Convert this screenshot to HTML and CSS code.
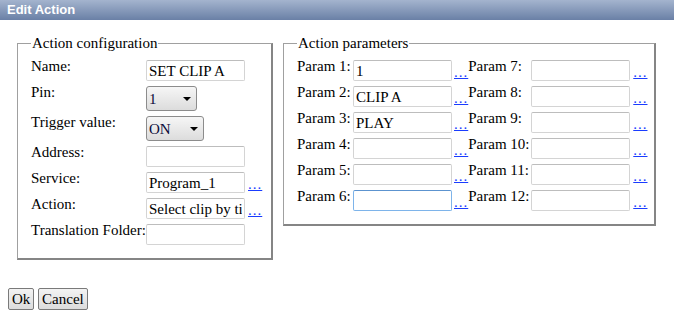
FILE: index.html
```html
<!DOCTYPE html>
<html lang="en">
<head>
  <meta charset="UTF-8">
  <title>Edit Action</title>
  <link rel="stylesheet" href="styles.css">
</head>
<body>

  <div class="titlebar">Edit Action</div>

  <div class="main">
    <fieldset class="config">
      <legend>Action configuration</legend>
      <div class="row">
        <label class="lbl">Name:</label>
        <input class="field" type="text" value="SET CLIP A">
      </div>
      <div class="row">
        <label class="lbl">Pin:</label>
        <span class="dropdown pin"><select><option>1</option></select></span>
      </div>
      <div class="row">
        <label class="lbl">Trigger value:</label>
        <span class="dropdown trigger"><select><option>ON</option></select></span>
      </div>
      <div class="row">
        <label class="lbl">Address:</label>
        <input class="field" type="text" value="">
      </div>
      <div class="row">
        <label class="lbl">Service:</label>
        <input class="field" type="text" value="Program_1">
        <a class="more" href="#">...</a>
      </div>
      <div class="row">
        <label class="lbl">Action:</label>
        <input class="field" type="text" value="Select clip by title">
        <a class="more" href="#">...</a>
      </div>
      <div class="row">
        <label class="lbl">Translation Folder:</label>
        <input class="field" type="text" value="">
      </div>
    </fieldset>

    <fieldset class="params">
      <legend>Action parameters</legend>
      <div class="prow">
        <label class="plbl">Param 1:</label><input class="field" type="text" value="1"><a class="more" href="#">...</a>
        <label class="plbl wide">Param 7:</label><input class="field" type="text" value=""><a class="more far" href="#">...</a>
      </div>
      <div class="prow">
        <label class="plbl">Param 2:</label><input class="field" type="text" value="CLIP A"><a class="more" href="#">...</a>
        <label class="plbl wide">Param 8:</label><input class="field" type="text" value=""><a class="more far" href="#">...</a>
      </div>
      <div class="prow">
        <label class="plbl">Param 3:</label><input class="field" type="text" value="PLAY"><a class="more" href="#">...</a>
        <label class="plbl wide">Param 9:</label><input class="field" type="text" value=""><a class="more far" href="#">...</a>
      </div>
      <div class="prow">
        <label class="plbl">Param 4:</label><input class="field" type="text" value=""><a class="more" href="#">...</a>
        <label class="plbl wide">Param 10:</label><input class="field" type="text" value=""><a class="more far" href="#">...</a>
      </div>
      <div class="prow">
        <label class="plbl">Param 5:</label><input class="field" type="text" value=""><a class="more" href="#">...</a>
        <label class="plbl wide">Param 11:</label><input class="field" type="text" value=""><a class="more far" href="#">...</a>
      </div>
      <div class="prow">
        <label class="plbl">Param 6:</label><input class="field focused" type="text" value=""><a class="more" href="#">...</a>
        <label class="plbl wide">Param 12:</label><input class="field" type="text" value=""><a class="more far" href="#">...</a>
      </div>
    </fieldset>
  </div>

  <div class="buttons">
    <button type="button">Ok</button>
    <button type="button">Cancel</button>
  </div>

</body>
</html>
```

FILE: styles.css
```css
html, body {
  margin: 0;
  background: #fff;
  font-family: "Liberation Serif", "Times New Roman", serif;
  font-size: 15px;
  color: #000;
}

.titlebar {
  height: 20px;
  line-height: 20px;
  padding-left: 7px;
  background: linear-gradient(#a4b4ce, #6a80a6);
  color: #fff;
  font-family: "Liberation Sans", Arial, sans-serif;
  font-weight: bold;
  font-size: 13px;
}

.main {
  display: flex;
  align-items: flex-start;
  gap: 10px;
  padding: 15px 0 0 17px;
}

fieldset {
  box-sizing: border-box;
  margin: 0;
  padding: 8px 0 13px 13px;
  border: 1px solid #a0a0a0;
  border-right: 2px solid #858585;
  border-bottom: 2px solid #858585;
}

legend {
  padding: 0 1px;
  line-height: 17px;
}

.config {
  width: 256px;
}

.params {
  width: 373px;
}

.row,
.prow {
  display: flex;
  align-items: flex-start;
  margin-bottom: 5px;
}

.row:last-child,
.prow:last-child {
  margin-bottom: 0;
}

.lbl,
.plbl {
  line-height: 17px;
  margin-top: -2px;
  white-space: nowrap;
}

.lbl {
  width: 115px;
}

.plbl {
  width: 56px;
}

.plbl.wide {
  width: 63px;
}

.field {
  box-sizing: border-box;
  width: 99px;
  height: 21px;
  margin: 0;
  padding: 2px 2px 0;
  border: 1px solid #d4d4d4;
  border-top-color: #bdbdbd;
  border-radius: 2px;
  font-family: "Liberation Serif", "Times New Roman", serif;
  font-size: 15px;
  color: #000;
  background: #fff;
  outline: none;
}

.field.focused {
  border-color: #7eb4ea;
  border-top-color: #5c93cf;
}

.more {
  align-self: center;
  margin-left: 2px;
  margin-top: 3px;
  color: #1a3cff;
  font-size: 15px;
  line-height: 15px;
  letter-spacing: 1px;
}

.row .more {
  margin-left: 3px;
}

.more.far {
  margin-left: 3px;
}

.dropdown {
  position: relative;
  display: inline-block;
}

.dropdown select {
  box-sizing: border-box;
  height: 25px;
  margin: 0;
  padding: 1px 0 0 2px;
  border: 1px solid #8c8c8c;
  border-radius: 3px;
  background: linear-gradient(#f6f6f6, #dcdcdc);
  font-family: "Liberation Serif", "Times New Roman", serif;
  font-size: 15px;
  color: #0a0a3a;
  -webkit-appearance: none;
  appearance: none;
}

.dropdown::after {
  content: "";
  position: absolute;
  right: 6px;
  top: 11px;
  border-left: 4px solid transparent;
  border-right: 4px solid transparent;
  border-top: 4px solid #000;
  pointer-events: none;
}

.dropdown.pin select {
  width: 51px;
}

.dropdown.trigger select {
  width: 58px;
}

.buttons {
  padding: 28px 0 0 8px;
}

.buttons button {
  height: 22px;
  margin: 0;
  padding: 0 3px;
  border: 1px solid #7a7a7a;
  border-radius: 2px;
  background: linear-gradient(#f3f3f3, #dcdcdc);
  font-family: "Liberation Serif", "Times New Roman", serif;
  font-size: 15px;
  color: #000;
}
```
